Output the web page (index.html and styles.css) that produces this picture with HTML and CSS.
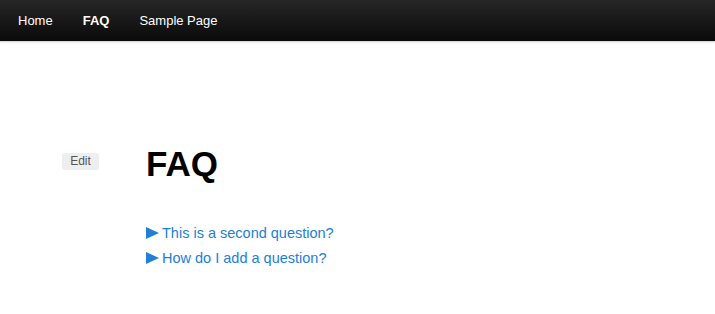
FILE: index.html
```html
<!DOCTYPE html>
<html lang="en">
<head>
<meta charset="utf-8">
<title>FAQ</title>
<link rel="stylesheet" href="styles.css">
</head>
<body>
<nav class="navbar">
  <ul class="nav">
    <li><a href="#">Home</a></li>
    <li class="active"><a href="#">FAQ</a></li>
    <li><a href="#">Sample Page</a></li>
  </ul>
</nav>
<main class="page">
  <div class="side">
    <a class="edit" href="#">Edit</a>
  </div>
  <article class="content">
    <h1 class="title">FAQ</h1>
    <ul class="faq">
      <li><a href="#"><svg class="arrow" viewBox="0 0 13 12" width="13" height="12"><polygon points="0,0 13,6 0,12"/></svg>This is a second question?</a></li>
      <li><a href="#"><svg class="arrow" viewBox="0 0 13 12" width="13" height="12"><polygon points="0,0 13,6 0,12"/></svg>How do I add a question?</a></li>
    </ul>
  </article>
</main>
</body>
</html>
```

FILE: styles.css
```css
html, body {
  margin: 0;
  padding: 0;
  background: #fff;
  font-family: "Liberation Sans", Arial, Helvetica, sans-serif;
}

.navbar {
  height: 41px;
  background: linear-gradient(to bottom, #262626, #0a0a0a);
  box-shadow: 0 1px 0 #d8d8d8, 0 2px 2px rgba(0, 0, 0, 0.08);
}

.nav {
  list-style: none;
  margin: 0;
  padding: 0 0 0 3px;
  display: flex;
  height: 100%;
}

.nav li a {
  display: block;
  padding: 0 15px;
  line-height: 41px;
  font-size: 13px;
  color: #fff;
  text-decoration: none;
}

.nav li.active a {
  font-weight: bold;
}

.page {
  display: flex;
  align-items: flex-start;
  padding: 103px 0 0 62px;
}

.side {
  width: 84px;
  flex: none;
  padding-top: 7px;
}

.edit {
  display: inline-block;
  width: 37px;
  height: 17px;
  line-height: 17px;
  text-align: center;
  font-size: 12px;
  color: #555;
  background: #eeeeee;
  border-radius: 3px;
  text-decoration: none;
}

.content {
  flex: 1;
}

.title {
  margin: 0;
  font-size: 35px;
  line-height: 40px;
  font-weight: bold;
  color: #000;
}

.faq {
  list-style: none;
  margin: 37px 0 0;
  padding: 0;
}

.faq li {
  font-size: 14.5px;
  line-height: 24px;
}

.faq a {
  color: #2180d6;
  text-decoration: none;
  display: inline-flex;
  align-items: center;
  gap: 3px;
}

.arrow {
  fill: #2180d6;
  flex: none;
}
```
